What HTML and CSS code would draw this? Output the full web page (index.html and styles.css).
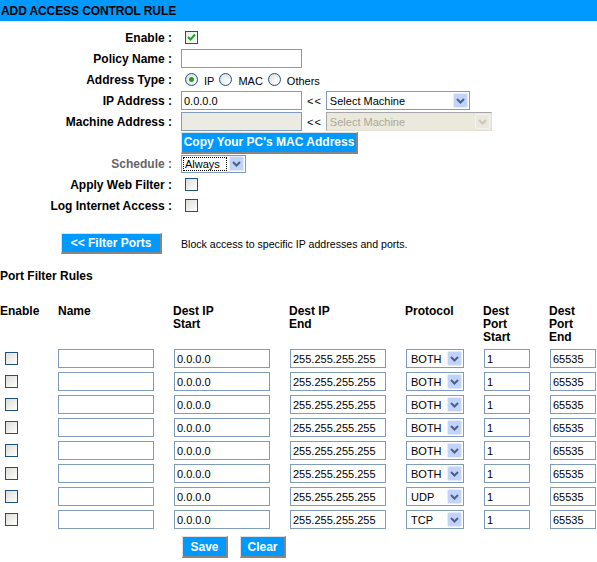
FILE: index.html
```html
<!DOCTYPE html>
<html lang="en">
<head>
  <meta charset="UTF-8" />
  <title>Add Access Control Rule</title>
  <link rel="stylesheet" href="styles.css">
</head>
<body>
  <div class="title">ADD ACCESS CONTROL RULE</div>

  <div class="form">
    <div class="lbl">Enable :</div>
    <div class="ctl"><span class="cb checked"><svg width="11" height="11" viewBox="0 0 11 11"><path d="M2 5 L4.5 7.5 L9 2.5" fill="none" stroke="#21A121" stroke-width="2"/></svg></span></div>

    <div class="lbl">Policy Name :</div>
    <div class="ctl"><input class="txt w120" type="text" value=""></div>

    <div class="lbl">Address Type :</div>
    <div class="ctl radios">
      <span class="rb on"></span><span class="rtxt">IP</span>
      <span class="rb"></span><span class="rtxt">MAC</span>
      <span class="rb"></span><span class="rtxt">Others</span>
    </div>

    <div class="lbl">IP Address :</div>
    <div class="ctl">
      <input class="txt w120" type="text" value="0.0.0.0">
      <span class="arrows">&lt;&lt;</span>
      <div class="sel w144"><span class="val">Select Machine</span><span class="arr"><svg width="15" height="15" viewBox="0 0 15 15"><rect x="0.5" y="0.5" width="14" height="14" rx="1.5" fill="#C1D3FB" stroke="#E4ECFD"/><path d="M4 6 L7.5 9.5 L11 6" fill="none" stroke="#4D6185" stroke-width="2"/></svg></span></div>
    </div>

    <div class="lbl">Machine Address :</div>
    <div class="ctl">
      <input class="txt w120 off" type="text" value="" disabled>
      <span class="arrows">&lt;&lt;</span>
      <div class="sel w166 dis"><span class="val">Select Machine</span><span class="arr"><svg width="15" height="15" viewBox="0 0 15 15"><rect x="0.5" y="0.5" width="14" height="14" rx="1.5" fill="#EAE8DE" stroke="#F4F3EE"/><path d="M4 6 L7.5 9.5 L11 6" fill="none" stroke="#C9C7BA" stroke-width="2"/></svg></span></div>
    </div>

    <div class="lbl"></div>
    <div class="ctl"><button class="btn copy">Copy Your PC's MAC Address</button></div>

    <div class="lbl grey">Schedule :</div>
    <div class="ctl"><div class="sel w64 focus"><span class="val">Always</span><span class="arr"><svg width="15" height="15" viewBox="0 0 15 15"><rect x="0.5" y="0.5" width="14" height="14" rx="1.5" fill="#C1D3FB" stroke="#E4ECFD"/><path d="M4 6 L7.5 9.5 L11 6" fill="none" stroke="#4D6185" stroke-width="2"/></svg></span></div></div>

    <div class="lbl">Apply Web Filter :</div>
    <div class="ctl"><span class="cb"></span></div>

    <div class="lbl">Log Internet Access :</div>
    <div class="ctl"><span class="cb"></span></div>
  </div>

  <div class="filter">
    <button class="btn ports">&lt;&lt; Filter Ports</button>
    <span class="hint">Block access to specific IP addresses and ports.</span>
  </div>

  <div class="section">Port Filter Rules</div>

  <div class="rules">
    <div class="th">Enable</div>
    <div class="th">Name</div>
    <div class="th">Dest IP<br>Start</div>
    <div class="th">Dest IP<br>End</div>
    <div class="th">Protocol</div>
    <div class="th">Dest<br>Port<br>Start</div>
    <div class="th">Dest<br>Port<br>End</div>
  </div>

  <div class="rules rows" id="rows"></div>

  <div class="actions">
    <button class="btn small">Save</button>
    <button class="btn small">Clear</button>
  </div>

  <script>
    const protocols = ["BOTH", "BOTH", "BOTH", "BOTH", "BOTH", "BOTH", "UDP", "TCP"];
    const rows = document.getElementById("rows");
    const arrow = '<span class="arr"><svg width="15" height="15" viewBox="0 0 15 15"><rect x="0.5" y="0.5" width="14" height="14" rx="1.5" fill="#C1D3FB" stroke="#E4ECFD"/><path d="M4 6 L7.5 9.5 L11 6" fill="none" stroke="#4D6185" stroke-width="2"/></svg></span>';
    protocols.forEach(function (p) {
      rows.insertAdjacentHTML("beforeend",
        '<div class="td"><span class="cb"></span></div>' +
        '<div class="td"><input class="txt w96" type="text" value=""></div>' +
        '<div class="td"><input class="txt w96" type="text" value="0.0.0.0"></div>' +
        '<div class="td"><input class="txt w96" type="text" value="255.255.255.255"></div>' +
        '<div class="td"><div class="sel w58 proto"><span class="val">' + p + '</span>' + arrow + '</div></div>' +
        '<div class="td"><input class="txt w46" type="text" value="1"></div>' +
        '<div class="td"><input class="txt w46" type="text" value="65535"></div>');
    });
  </script>
</body>
</html>
```

FILE: styles.css
```css
body {
  margin: 0;
  background-color: #fff;
  font-family: "Liberation Sans", Arial, sans-serif;
  font-size: 11px;
  color: #000;
}
.title {
  height: 21px;
  line-height: 22px;
  background-color: #0099FF;
  padding-left: 1px;
  font-size: 12px;
  font-weight: bold;
  letter-spacing: -0.1px;
}
.form {
  display: grid;
  grid-template-columns: 172px 1fr;
  grid-auto-rows: 21px;
  column-gap: 9px;
  align-items: center;
  margin-top: 6px;
}
.lbl {
  text-align: right;
  font-size: 12px;
  font-weight: bold;
}
.lbl.grey {
  color: #666;
}
.ctl {
  display: flex;
  align-items: center;
}
.cb {
  display: inline-flex;
  align-items: center;
  justify-content: center;
  width: 13px;
  height: 13px;
  box-sizing: border-box;
  border: 1px solid #1C5180;
  background: linear-gradient(135deg, #DCDCD7, #FFFFFF);
  margin-left: 4px;
}
.cb.checked {
  background: linear-gradient(135deg, #E8E8E4, #FFFFFF);
}
.radios .rb {
  width: 13px;
  height: 13px;
  box-sizing: border-box;
  border: 1px solid #1C5180;
  border-radius: 50%;
  background: radial-gradient(circle at 65% 65%, #FFFFFF, #D8D8D2);
  margin-left: 5px;
  display: inline-flex;
  align-items: center;
  justify-content: center;
}
.radios .rb:first-child {
  margin-left: 4px;
}
.rb.on::after {
  content: "";
  width: 5px;
  height: 5px;
  border-radius: 50%;
  background-color: #21A121;
}
.rtxt {
  margin-left: 6px;
  margin-top: 3px;
}
.txt {
  height: 19px;
  box-sizing: border-box;
  border: 1px solid #7F9DB9;
  padding: 0 2px;
  margin: 0;
  font-family: "Liberation Sans", Arial, sans-serif;
  font-size: 11px;
  background-color: #fff;
  outline: none;
}
.txt.off {
  background-color: #EBEBE4;
}
.w120 { width: 121px; }
.w96 { width: 96px; }
.w46 { width: 46px; }
.arrows {
  margin: 0 4px 0 5px;
  letter-spacing: 1px;
}
.sel {
  display: inline-flex;
  align-items: center;
  height: 19px;
  box-sizing: border-box;
  border: 1px solid #7F9DB9;
  background-color: #fff;
}
.sel .val {
  flex: 1;
  padding-left: 3px;
  white-space: nowrap;
  overflow: hidden;
}
.sel .arr {
  display: flex;
  margin-right: 1px;
}
.w144 { width: 144px; }
.w166 { width: 166px; }
.w64 { width: 65px; height: 18px; }
.w58 { width: 58px; }
.sel.dis {
  border-color: #A7A6AA #E2E0D5 #E2E0D5 #A7A6AA;
  background-color: #EBE9DB;
  color: #ACA899;
}
.sel.focus .val {
  outline: 1px dotted #000;
  outline-offset: -1px;
  margin: 1px 2px 1px 1px;
  padding-left: 2px;
  line-height: 14px;
}
.proto .val {
  padding-left: 4px;
}
.btn {
  background-color: #0099FF;
  color: #fff;
  font-family: "Liberation Sans", Arial, sans-serif;
  font-size: 11px;
  font-weight: bold;
  border-style: solid;
  border-width: 1px 2px 2px 1px;
  border-color: #E0E0E0 #8A8580 #8A8580 #E0E0E0;
  padding: 0;
  margin: 0;
  cursor: pointer;
}
.copy {
  width: 177px;
  height: 22px;
  font-size: 12px;
}
.filter {
  display: flex;
  align-items: center;
  margin-top: 17px;
  padding-left: 61px;
}
.ports {
  width: 101px;
  height: 21px;
  font-size: 12px;
}
.hint {
  margin-left: 19px;
  font-size: 10.6px;
}
.section {
  font-size: 12px;
  font-weight: bold;
  margin-top: 15px;
}
.rules {
  display: grid;
  grid-template-columns: 58px 115px 116px 116px 78px 66px 48px;
}
.rules:not(.rows) {
  margin-top: 22px;
}
.th {
  font-size: 12px;
  font-weight: bold;
  line-height: 13px;
}
.rows {
  grid-auto-rows: 23px;
  margin-top: 3px;
}
.td {
  display: flex;
  align-items: center;
}
.td:nth-child(7n+1) .cb {
  margin-left: 5px;
}
.td:nth-child(7n+3),
.td:nth-child(7n+4),
.td:nth-child(7n+5),
.td:nth-child(7n+6),
.td:nth-child(7n+7) {
  padding-left: 1px;
}
.actions {
  display: flex;
  gap: 12px;
  padding-left: 182px;
  margin-top: 5px;
}
.small {
  width: 46px;
  height: 22px;
  font-size: 12px;
}
```
